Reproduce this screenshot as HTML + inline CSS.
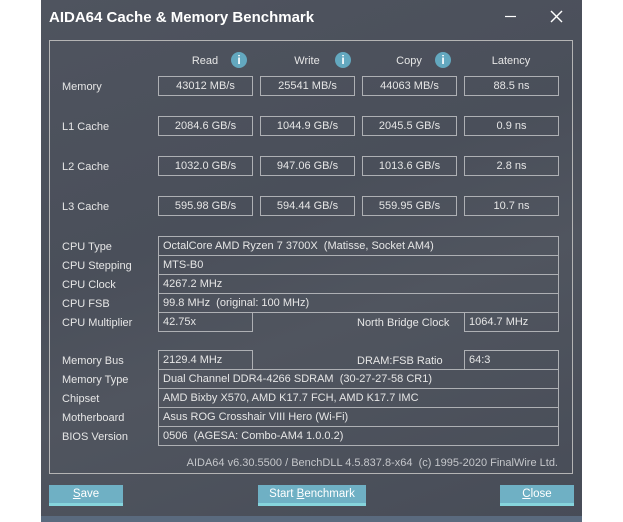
<!DOCTYPE html>
<html><head><style>
*{margin:0;padding:0;box-sizing:border-box}
body{width:623px;height:522px;background:#fff;position:relative;overflow:hidden;font-family:"Liberation Sans",sans-serif;font-size:11px;color:#e6e6e6}
.win{position:absolute;left:41px;top:0;width:541px;height:522px;background:linear-gradient(160deg,#4f545f 0%,#4a4f5a 40%,#50555f 60%,#474c57 100%)}
.strip{position:absolute;left:41px;top:516px;width:541px;height:6px;background:#5a6a7e}
.t{position:absolute;white-space:nowrap}
.title{left:49px;top:9px;font-size:15px;font-weight:bold;color:#fff}
.grp{position:absolute;left:49px;top:40px;width:524px;height:434px;border:1px solid #b4b4b4}
.b{position:absolute;border:1px solid #aeb0b4;height:20px;line-height:19px;text-align:center}
.r{position:absolute;border:1px solid #aeb0b4;border-top:none;height:19px;line-height:19px;padding-left:4px}
.r.f{border-top:1px solid #aeb0b4;height:20px}
.hd{position:absolute;top:55px;text-align:center;width:94px}
.ic{position:absolute;top:52px;width:16px;height:16px;border-radius:50%;background:#63a8bf;color:#fff;font-weight:bold;font-size:12px;line-height:16px;text-align:center}
.lb{position:absolute;left:62px}
.btn{position:absolute;top:485px;height:21px;background:#6fb0c4;border-bottom:3px solid #86d4dc;color:#fff;text-align:center;line-height:18px;font-size:11.5px}
</style></head><body>
<div class="win"></div>
<div class="strip"></div>
<div class="t title">AIDA64 Cache &amp; Memory Benchmark</div>
<svg style="position:absolute;left:505px;top:10px" width="60" height="14"><line x1="0" y1="6.5" x2="11" y2="6.5" stroke="#fff" stroke-width="1.2"/><line x1="46" y1="1" x2="57" y2="12" stroke="#fff" stroke-width="1.4"/><line x1="57" y1="1" x2="46" y2="12" stroke="#fff" stroke-width="1.4"/></svg>
<div class="grp"></div>

<div class="hd" style="left:158px">Read</div><div class="ic" style="left:231px">i</div>
<div class="hd" style="left:260px">Write</div><div class="ic" style="left:335px">i</div>
<div class="hd" style="left:362px">Copy</div><div class="ic" style="left:435px">i</div>
<div class="hd" style="left:464px">Latency</div>

<div class="lb" style="top:81px">Memory</div>
<div class="b" style="left:158px;top:76px;width:95px">43012 MB/s</div>
<div class="b" style="left:260px;top:76px;width:95px">25541 MB/s</div>
<div class="b" style="left:362px;top:76px;width:95px">44063 MB/s</div>
<div class="b" style="left:464px;top:76px;width:95px">88.5 ns</div>

<div class="lb" style="top:121px">L1 Cache</div>
<div class="b" style="left:158px;top:116px;width:95px">2084.6 GB/s</div>
<div class="b" style="left:260px;top:116px;width:95px">1044.9 GB/s</div>
<div class="b" style="left:362px;top:116px;width:95px">2045.5 GB/s</div>
<div class="b" style="left:464px;top:116px;width:95px">0.9 ns</div>

<div class="lb" style="top:161px">L2 Cache</div>
<div class="b" style="left:158px;top:156px;width:95px">1032.0 GB/s</div>
<div class="b" style="left:260px;top:156px;width:95px">947.06 GB/s</div>
<div class="b" style="left:362px;top:156px;width:95px">1013.6 GB/s</div>
<div class="b" style="left:464px;top:156px;width:95px">2.8 ns</div>

<div class="lb" style="top:201px">L3 Cache</div>
<div class="b" style="left:158px;top:196px;width:95px">595.98 GB/s</div>
<div class="b" style="left:260px;top:196px;width:95px">594.44 GB/s</div>
<div class="b" style="left:362px;top:196px;width:95px">559.95 GB/s</div>
<div class="b" style="left:464px;top:196px;width:95px">10.7 ns</div>

<div class="lb" style="top:241px">CPU Type</div>
<div class="lb" style="top:260px">CPU Stepping</div>
<div class="lb" style="top:279px">CPU Clock</div>
<div class="lb" style="top:298px">CPU FSB</div>
<div class="lb" style="top:317px">CPU Multiplier</div>
<div class="r f" style="left:158px;top:236px;width:401px">OctalCore AMD Ryzen 7 3700X&nbsp; (Matisse, Socket AM4)</div>
<div class="r" style="left:158px;top:256px;width:401px">MTS-B0</div>
<div class="r" style="left:158px;top:275px;width:401px">4267.2 MHz</div>
<div class="r" style="left:158px;top:294px;width:401px">99.8 MHz&nbsp; (original: 100 MHz)</div>
<div class="r" style="left:158px;top:313px;width:95px">42.75x</div>
<div class="t" style="left:357px;top:317px">North Bridge Clock</div>
<div class="r" style="left:464px;top:313px;width:95px">1064.7 MHz</div>

<div class="lb" style="top:355px">Memory Bus</div>
<div class="lb" style="top:374px">Memory Type</div>
<div class="lb" style="top:393px">Chipset</div>
<div class="lb" style="top:412px">Motherboard</div>
<div class="lb" style="top:431px">BIOS Version</div>
<div class="r f" style="left:158px;top:350px;width:95px">2129.4 MHz</div>
<div class="t" style="left:357px;top:355px">DRAM:FSB Ratio</div>
<div class="r f" style="left:464px;top:350px;width:95px">64:3</div>
<div class="r f" style="left:158px;top:369px;width:401px">Dual Channel DDR4-4266 SDRAM&nbsp; (30-27-27-58 CR1)</div>
<div class="r" style="left:158px;top:389px;width:401px">AMD Bixby X570, AMD K17.7 FCH, AMD K17.7 IMC</div>
<div class="r" style="left:158px;top:408px;width:401px">Asus ROG Crosshair VIII Hero (Wi-Fi)</div>
<div class="r" style="left:158px;top:427px;width:401px">0506&nbsp; (AGESA: Combo-AM4 1.0.0.2)</div>

<div class="t" style="right:65px;top:457px;color:#c4c6ca">AIDA64 v6.30.5500 / BenchDLL 4.5.837.8-x64&nbsp; (c) 1995-2020 FinalWire Ltd.</div>

<div class="btn" style="left:49px;width:74px"><u>S</u>ave</div>
<div class="btn" style="left:258px;width:108px">Start <u>B</u>enchmark</div>
<div class="btn" style="left:500px;width:74px"><u>C</u>lose</div>
</body></html>
